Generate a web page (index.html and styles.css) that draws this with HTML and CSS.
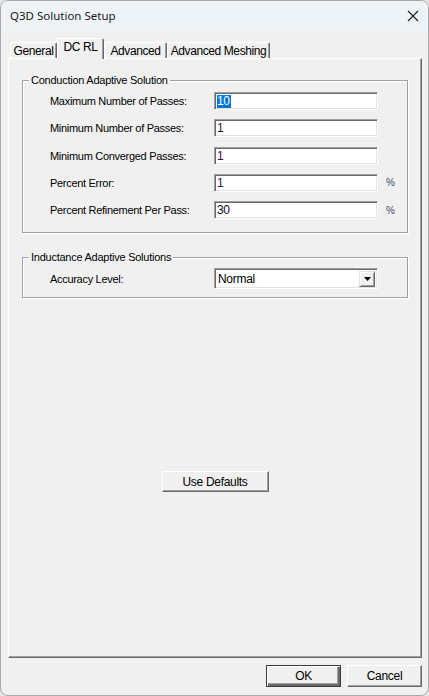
FILE: index.html
```html
<!DOCTYPE html>
<html lang="en">
<head>
<meta charset="utf-8">
<title>Q3D Solution Setup</title>
<link rel="stylesheet" href="styles.css">
</head>
<body>
<div class="window">
  <div class="titlebar">
    <span class="title">Q3D Solution Setup</span>
    <svg class="close" width="12" height="12" viewBox="0 0 12 12"><path d="M1 1 L11 11 M11 1 L1 11" stroke="#1b1b1b" stroke-width="1.1" fill="none"/></svg>
  </div>
  <div class="main">
    <div class="tabs">
      <div class="tab tab-general">General</div>
      <div class="tab tab-dcrl active">DC RL</div>
      <div class="tab tab-adv">Advanced</div>
      <div class="tab tab-mesh">Advanced Meshing</div>
    </div>
    <div class="panel">
      <fieldset class="group group-cond">
        <legend>Conduction Adaptive Solution</legend>
        <div class="form">
          <span class="label">Maximum Number of Passes:</span>
          <div class="field"><span class="sel">10</span></div>
          <span></span>
          <span class="label">Minimum Number of Passes:</span>
          <div class="field val">1</div>
          <span></span>
          <span class="label">Minimum Converged Passes:</span>
          <div class="field val">1</div>
          <span></span>
          <span class="label">Percent Error:</span>
          <div class="field val">1</div>
          <span class="unit">%</span>
          <span class="label">Percent Refinement Per Pass:</span>
          <div class="field val2">30</div>
          <span class="unit">%</span>
        </div>
      </fieldset>
      <fieldset class="group group-ind">
        <legend>Inductance Adaptive Solutions</legend>
        <div class="form">
          <span class="label">Accuracy Level:</span>
          <div class="combo">
            <span class="combo-text">Normal</span>
            <span class="combo-btn"><svg width="7" height="4" viewBox="0 0 7 4"><path d="M0 0 H7 L3.5 4 Z" fill="#000"/></svg></span>
          </div>
          <span></span>
        </div>
      </fieldset>
      <div class="defaults-row">
        <div class="btn btn-defaults">Use Defaults</div>
      </div>
    </div>
    <div class="footer">
      <div class="btn btn-default">OK</div>
      <div class="btn">Cancel</div>
    </div>
  </div>
</div>
</body>
</html>
```
FILE: styles.css
```css
html, body {
  margin: 0;
  padding: 0;
  background: #e4e4e4;
}

.window {
  width: 429px;
  height: 696px;
  box-sizing: border-box;
  border: 1px solid #a9a9a9;
  border-radius: 8px;
  background: #f0f0f0;
  overflow: hidden;
  display: flex;
  flex-direction: column;
  font-family: "Liberation Sans", Arial, sans-serif;
  font-size: 11px;
  color: #000;
}

.titlebar {
  height: 30px;
  flex: none;
  background: #eef3f8;
  display: flex;
  align-items: center;
  justify-content: space-between;
  padding: 0 9px 0 9px;
}

.title {
  font-family: "Noto Sans", "Open Sans", sans-serif;
  font-size: 11.5px;
  color: #1a1a1a;
  margin-top: -1px;
}

.close {
  margin-top: -1px;
}

.main {
  flex: 1;
  display: flex;
  flex-direction: column;
  padding: 7px 6px 0 7px;
}

.tabs {
  display: flex;
  align-items: flex-end;
  height: 20px;
  padding-left: 2px;
}

.tab {
  box-sizing: border-box;
  height: 16px;
  border-top: 1px solid #ffffff;
  border-left: 1px solid #ffffff;
  border-right: 1px solid #696969;
  box-shadow: inset -1px 0 0 #a0a0a0;
  border-radius: 2px 2px 0 0;
  background: #f0f0f0;
  text-align: center;
  line-height: 16px;
  white-space: nowrap;
  font-size: 12px;
  letter-spacing: -0.4px;
}

.tab-general { width: 47px; }
.tab-dcrl { width: 47px; }
.tab-adv { width: 63px; }
.tab-mesh { width: 103px; }

.tab.active {
  height: 21px;
  margin-bottom: -1px;
  position: relative;
  z-index: 1;
  line-height: 17px;
}

.panel {
  box-sizing: border-box;
  height: 600px;
  flex: none;
  border-top: 1px solid #ffffff;
  border-left: 1px solid #ffffff;
  border-right: 1px solid #696969;
  border-bottom: 1px solid #696969;
  box-shadow: inset -1px -1px 0 #a0a0a0;
  padding: 14px 13px 0 13px;
  display: flex;
  flex-direction: column;
}

.group {
  margin: 0;
  min-width: 0;
  border: 1px solid #a0a0a0;
  box-shadow: inset 1px 1px 0 #ffffff, 1px 1px 0 #ffffff;
  padding: 0;
}

.group legend {
  margin-left: 6px;
  padding: 0 2px;
  line-height: 14px;
  font-size: 11px;
  letter-spacing: -0.25px;
}

.group-cond {
  padding: 5px 0 13px 0;
}

.group-ind {
  margin-top: 17px;
  padding: 4px 0 8px 0;
}

.form {
  display: grid;
  grid-template-columns: 164px 164px auto;
  row-gap: 9.25px;
  align-items: center;
  padding-left: 27px;
}

.label {
  white-space: nowrap;
  letter-spacing: -0.3px;
}

.field {
  box-sizing: border-box;
  height: 18px;
  background: #ffffff;
  border-top: 1px solid #a0a0a0;
  border-left: 1px solid #a0a0a0;
  border-right: 1px solid #ffffff;
  border-bottom: 1px solid #ffffff;
  box-shadow: inset 1px 1px 0 #696969, inset -1px -1px 0 #e3e3e3;
  padding: 2px 0 0 2px;
  line-height: 13px;
  font-size: 12px;
  letter-spacing: -0.3px;
}

.val { color: #3a0a3a; }
.val2 { color: #0a0a2a; }

.sel {
  background: #0078d7;
  color: #ffffff;
  display: inline-block;
  padding: 0 1px 0 0;
}

.unit {
  margin-left: 8px;
  color: #3b4a6b;
  font-size: 10px;
}

.combo {
  box-sizing: border-box;
  height: 21px;
  background: #ffffff;
  border-top: 1px solid #a0a0a0;
  border-left: 1px solid #a0a0a0;
  border-right: 1px solid #ffffff;
  border-bottom: 1px solid #ffffff;
  box-shadow: inset 1px 1px 0 #696969, inset -1px -1px 0 #e3e3e3;
  display: flex;
  align-items: center;
  justify-content: space-between;
  padding: 2px 2px 2px 3px;
}

.combo-text {
  font-size: 12px;
  letter-spacing: -0.3px;
  color: #000;
}

.combo-btn {
  box-sizing: border-box;
  width: 16px;
  height: 16px;
  background: #f0f0f0;
  border-top: 1px solid #e3e3e3;
  border-left: 1px solid #e3e3e3;
  border-right: 1px solid #696969;
  border-bottom: 1px solid #696969;
  box-shadow: inset 1px 1px 0 #ffffff, inset -1px -1px 0 #a0a0a0;
  display: flex;
  align-items: center;
  justify-content: center;
}

.defaults-row {
  display: flex;
  justify-content: center;
  margin-top: 173px;
}

.btn {
  box-sizing: border-box;
  width: 75px;
  height: 22px;
  background: #f0f0f0;
  border-top: 1px solid #ffffff;
  border-left: 1px solid #ffffff;
  border-right: 1px solid #696969;
  border-bottom: 1px solid #696969;
  box-shadow: inset -1px -1px 0 #a0a0a0;
  display: flex;
  align-items: center;
  justify-content: center;
  font-size: 12px;
  letter-spacing: -0.3px;
}

.btn-defaults {
  width: 107px;
  height: 21px;
}

.btn-default {
  border: 1px solid #3c3c3c;
  box-shadow: inset 1px 1px 0 #ffffff, inset -2px -2px 0 #696969, inset -3px -3px 0 #a0a0a0;
}

.footer {
  display: flex;
  justify-content: flex-end;
  gap: 6px;
  padding-top: 7px;
}
```
